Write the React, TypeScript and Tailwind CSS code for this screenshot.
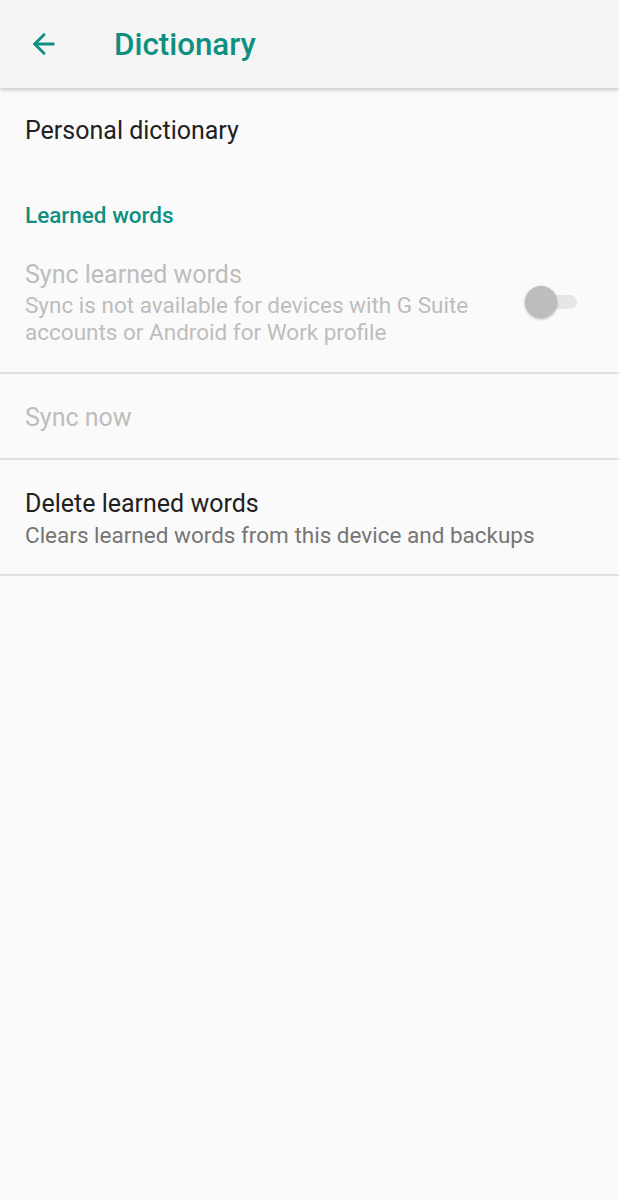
import { ArrowLeft } from 'lucide-react';

export default function App() {
    return (
        <div className="min-h-[1200px] w-full bg-[#fafafa]" style={{ fontFamily: 'Roboto, "Noto Sans", sans-serif' }}>
            <header className="flex h-[88px] items-center bg-[#f5f5f5] shadow-[0_2px_4px_rgba(0,0,0,0.2)] relative z-10">
                <div className="w-[114px] pl-[28px]">
                    <ArrowLeft className="h-[32px] w-[32px] text-[#0f8f7f]" strokeWidth={2.2} />
                </div>
                <h1 className="pt-[2px] text-[31.3px] font-medium text-[#0f8f7f]">Dictionary</h1>
            </header>

            <div className="flex h-[86px] items-center px-[25px]">
                <p className="text-[25px] text-[#212121]">Personal dictionary</p>
            </div>

            <div className="px-[25px] pt-[27px]">
                <p className="text-[22.5px] leading-[28px] font-medium text-[#0f8f7f]">Learned words</p>
            </div>

            <div className="flex items-center px-[25px] border-b-2 border-[#e0e0e0]">
                <div className="flex-1 pt-[31px] pb-[26px]">
                    <p className="text-[25px] leading-[30px] text-[#bdbdbd]">Sync learned words</p>
                    <p className="mt-[2px] text-[22.5px] leading-[27px] text-[#bdbdbd]">
                        Sync is not available for devices with G Suite
                        <br />
                        accounts or Android for Work profile
                    </p>
                </div>
                <div className="relative mr-[17px] mt-[3px] h-[32px] w-[52px]">
                    <div className="absolute left-[5px] top-[9px] h-[14px] w-[47px] rounded-full bg-[#e6e6e6]" />
                    <div className="absolute left-0 top-0 h-[32px] w-[32px] rounded-full bg-[#bdbdbd] shadow-[0_1px_3px_rgba(0,0,0,0.3)]" />
                </div>
            </div>

            <div className="flex h-[86px] items-center px-[25px] pt-[3px] border-b-2 border-[#e0e0e0]">
                <p className="text-[25px] text-[#bdbdbd]">Sync now</p>
            </div>

            <div className="px-[25px] pt-[29px] pb-[23px] border-b-2 border-[#e0e0e0]">
                <p className="text-[25px] leading-[30px] text-[#212121]">Delete learned words</p>
                <p className="text-[22.5px] leading-[32px] text-[#757575]">Clears learned words from this device and backups</p>
            </div>
        </div>
    );
}
